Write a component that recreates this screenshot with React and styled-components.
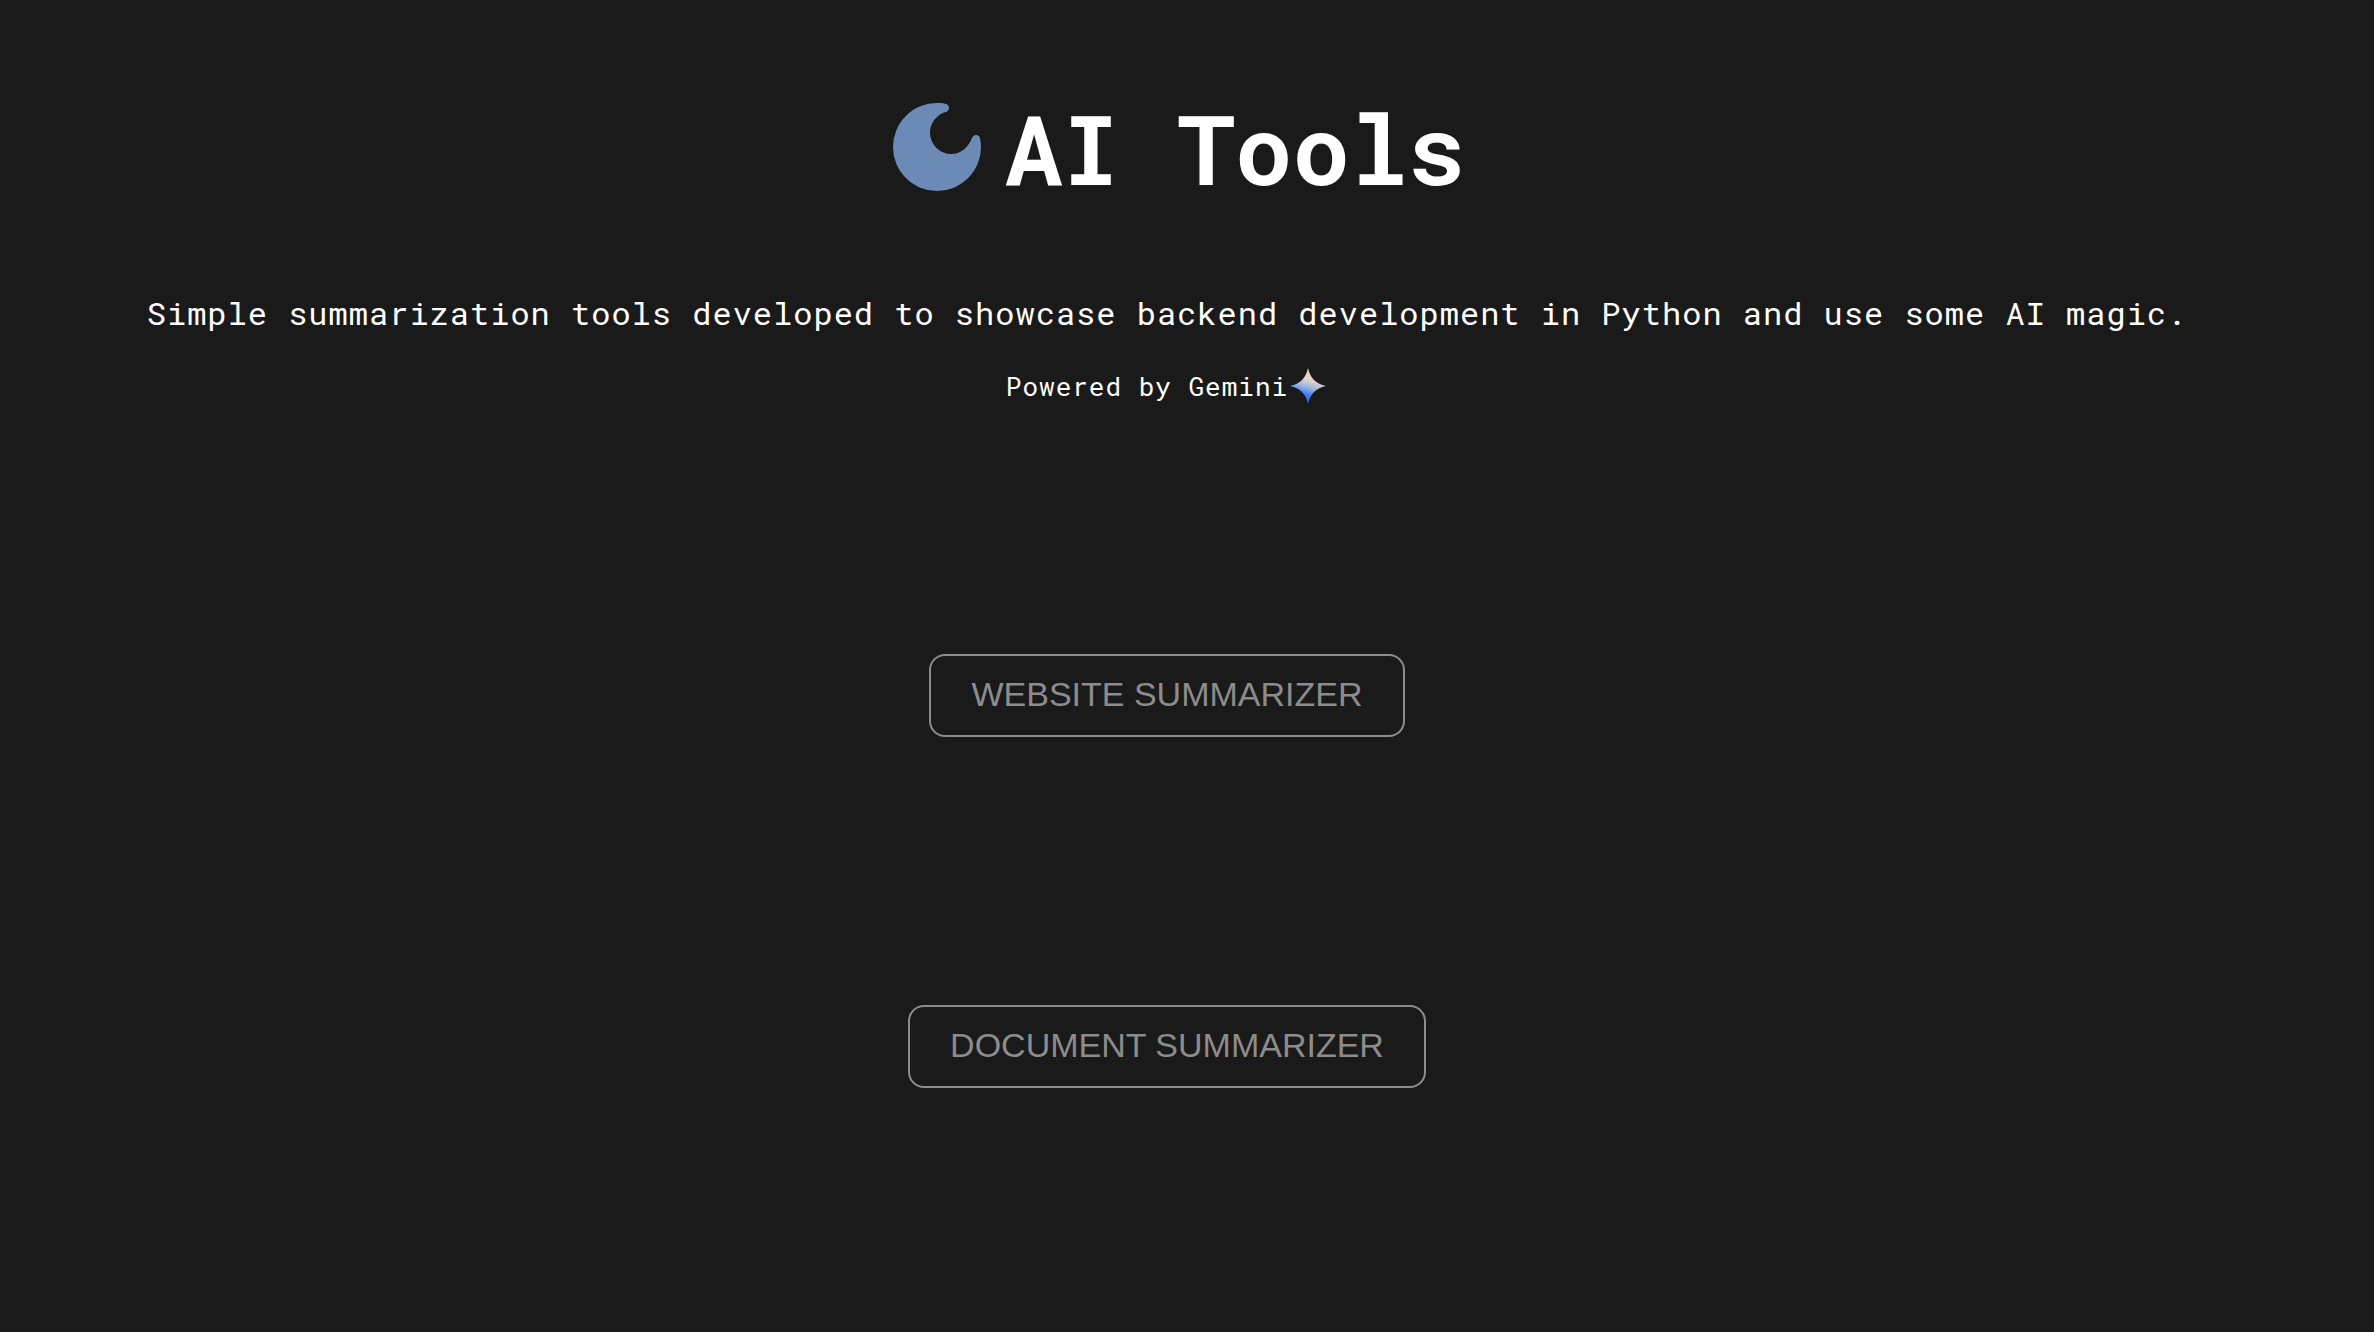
import React from "react";
import styled, { createGlobalStyle } from "styled-components";

const GlobalStyle = createGlobalStyle`
  *, *::before, *::after { box-sizing: border-box; }
  body {
    margin: 0;
    background: #1a1a1a;
    color: #ffffff;
    font-family: "Roboto Mono", "DejaVu Sans Mono", "Liberation Mono", monospace;
  }
`;

const Page = styled.main`
  display: flex;
  flex-direction: column;
  align-items: center;
  min-height: 100vh;
  padding: 84px 40px 80px 0;
`;

const Header = styled.header`
  display: flex;
  flex-direction: column;
  align-items: center;
`;

const TitleRow = styled.div`
  display: flex;
  align-items: center;
  gap: 24px;
  padding-left: 24px;
`;

const Title = styled.h1`
  margin: 0;
  font-size: 96px;
  line-height: 128px;
  font-weight: 700;
`;

const MoonIcon = styled.svg`
  width: 88px;
  height: 88px;
  margin-bottom: 2px;
  fill: #6c8ab6;
`;

const Lead = styled.p`
  margin: 77px 0 0;
  font-size: 32px;
  line-height: 48px;
  letter-spacing: 1px;
  text-align: center;
`;

const Powered = styled.p`
  display: flex;
  align-items: center;
  margin: 29px 0 0;
  font-size: 26px;
  line-height: 40px;
  letter-spacing: 1px;
`;

const SparkIcon = styled.svg`
  width: 40px;
  height: 40px;
`;

const Tools = styled.nav`
  display: flex;
  flex-direction: column;
  align-items: center;
  gap: 268px;
  margin-top: 248px;
`;

const ToolButton = styled.button`
  padding: 0 40px 2px;
  border: 2px solid #8c8c8c;
  border-radius: 16px;
  background: transparent;
  color: #8c8c8c;
  font-family: "Liberation Sans", Arial, sans-serif;
  font-size: 34px;
  line-height: 77px;
  text-transform: uppercase;
  cursor: pointer;
`;

const tools = ["Website Summarizer", "Document Summarizer"];

export default function App() {
  return (
    <>
      <GlobalStyle />
      <Page>
        <Header>
          <TitleRow>
            <MoonIcon viewBox="0 0 88 88" aria-hidden="true">
              <path d="M44 0C48 0 51 0.4 53 1C57 2 57 7.500 53 9C44 11 37 20 37 30A21.500 21.500 0 0 0 58.500 51C68 51 75.500 44 79 35C80.500 31 86 31 87 35C87.500 38 88 41 88 44A44 44 0 1 1 44 0Z" />
            </MoonIcon>
            <Title>AI Tools</Title>
          </TitleRow>
          <Lead>
            Simple summarization tools developed to showcase backend development in Python and use some AI magic.
          </Lead>
          <Powered>
            Powered by Gemini
            <SparkIcon viewBox="0 0 40 40" aria-hidden="true">
              <defs>
                <linearGradient id="spark" x1="15" y1="38" x2="25" y2="4" gradientUnits="userSpaceOnUse">
                  <stop offset="0" stopColor="#1c5cf5" />
                  <stop offset="0.28" stopColor="#3f7bf2" />
                  <stop offset="0.5" stopColor="#9db8e2" />
                  <stop offset="0.7" stopColor="#e2d2c8" />
                  <stop offset="1" stopColor="#f2d9c2" />
                </linearGradient>
              </defs>
              <path fill="url(#spark)" d="M20 2C22 12 28 18 38 20C28 22 22 28 20 38C18 28 12 22 2 20C12 18 18 12 20 2Z" />
            </SparkIcon>
          </Powered>
        </Header>
        <Tools>
          {tools.map((name) => (
            <ToolButton key={name} type="button">{name}</ToolButton>
          ))}
        </Tools>
      </Page>
    </>
  );
}
